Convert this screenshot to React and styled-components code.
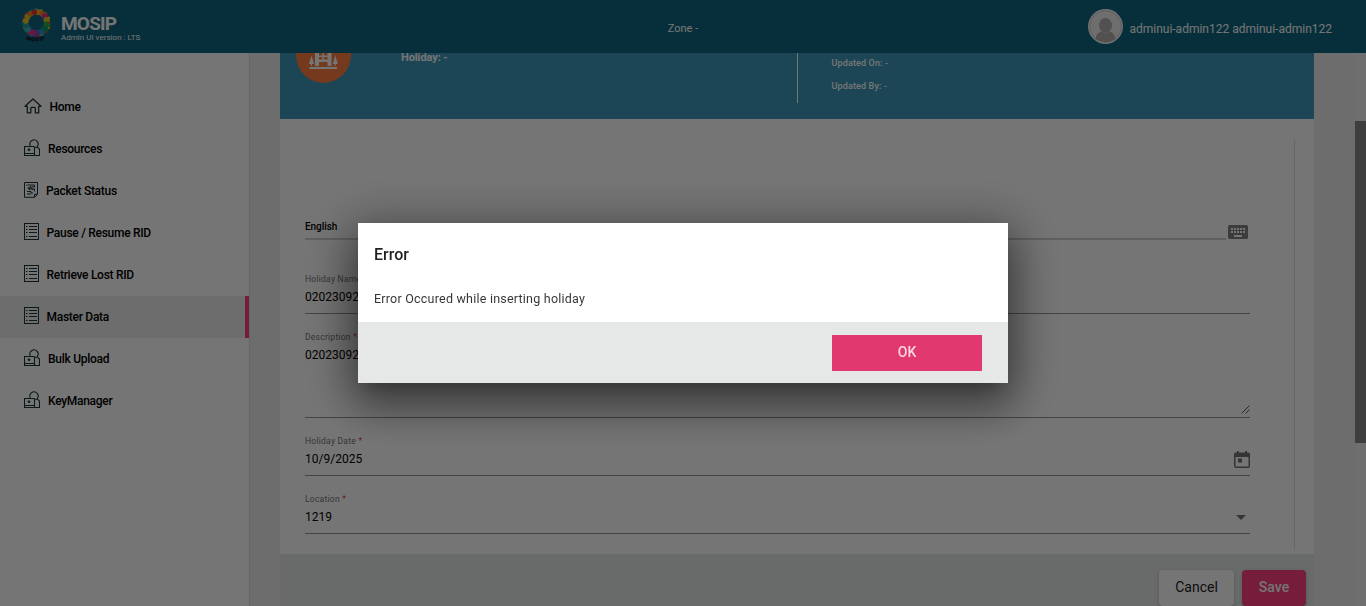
import React from "react";
import styled, { createGlobalStyle } from "styled-components";

const GlobalStyle = createGlobalStyle`
  * { box-sizing: border-box; }
  html, body { margin: 0; padding: 0; overflow: hidden; }
  body { font-family: Roboto, "Liberation Sans", sans-serif; color: #000; }
  svg { display: block; flex: none; }
`;

const Page = styled.div`
  display: flex;
  flex-direction: column;
  height: 606px;
  width: 1366px;
  overflow: hidden;
  background: #eeeeee;
`;

const Header = styled.header`
  flex: none;
  height: 53px;
  background: #0f6882;
  color: #fff;
  display: grid;
  grid-template-columns: 1fr auto 1fr;
  align-items: start;
`;

const Brand = styled.div`
  display: flex;
  padding: 7px 0 0 20px;
`;

const BrandText = styled.div`
  margin: 8px 0 0 8px;
`;

const BrandName = styled.div`
  font-size: 19px;
  line-height: 18px;
  font-weight: 700;
  letter-spacing: -0.8px;
`;

const Version = styled.div`
  font-size: 8px;
  line-height: 9px;
  font-weight: 400;
  letter-spacing: 0.02px;
  white-space: nowrap;
`;

const Zone = styled.div`
  font-size: 11px;
  line-height: 14px;
  padding-top: 22px;
`;

const User = styled.div`
  display: flex;
  justify-content: flex-end;
  padding: 9px 34px 0 0;
`;

const UserName = styled.div`
  font-size: 12px;
  line-height: 16px;
  margin: 12px 0 0 6px;
`;

const Body = styled.div`
  flex: 1;
  min-height: 0;
  display: flex;
`;

const Sidebar = styled.nav`
  width: 250px;
  flex: none;
  padding-top: 33px;
  background: #fff;
  border-right: 1px solid #dcdcdc;
`;

const NavItem = styled.div`
  height: 42px;
  display: flex;
  align-items: center;
  padding-left: 24px;
  font-size: 12px;
  font-weight: 500;
  letter-spacing: -0.28px;
  background: ${(p) => (p.$active ? "#eeeeee" : "transparent")};
  border-right: 4px solid ${(p) => (p.$active ? "#ff4081" : "transparent")};
`;

const NavIcon = styled.span`
  display: block;
  margin: -3px ${(p) => p.$gap}px 0 0;
`;

const Main = styled.main`
  flex: 1;
  display: flex;
  padding-left: 30px;
`;

const Panel = styled.section`
  width: 1034px;
  flex: none;
  display: flex;
  flex-direction: column;
`;

const Banner = styled.div`
  height: 66px;
  flex: none;
  overflow: hidden;
  background: #3d9abb;
  color: #fff;
  display: flex;
  padding-left: 16px;
`;

const Badge = styled.div`
  width: 55px;
  height: 56px;
  margin: -26px 1px 0 0;
  border-radius: 50%;
  background: #ff7c3f;
  flex: none;
  & > svg { margin: -1px 0 0 -1px; }
`;

const BannerTitle = styled.div`
  width: 396px;
  margin: 0 0 0 49px;
  font-size: 11px;
  line-height: 10px;
  font-weight: 700;
  letter-spacing: -0.1px;
`;

const BannerMeta = styled.div`
  height: 50px;
  border-left: 1px solid #fff;
  padding-left: 33.5px;
  font-size: 9px;
  line-height: 23px;
  font-weight: 500;
  letter-spacing: 0.14px;
  & > div:first-child { margin-top: -1px; }
`;

const Form = styled.div`
  height: 435px;
  flex: none;
  background: #fff;
  display: flex;
  padding: 21px 19px 5px 25px;
`;

const Fields = styled.div`
  width: 970px;
  padding-right: 25px;
`;

const Divider = styled.div`
  width: 1px;
  margin-left: 19px;
  background: #dddddd;
`;

const LanguageRow = styled.div`
  display: flex;
  align-items: flex-start;
  margin-top: 79px;
  height: 29px;
`;

const Language = styled.div`
  width: 921px;
  height: 21px;
  border-bottom: 2px solid #d0d0d0;
  font-size: 10px;
  line-height: 15px;
  font-weight: 500;
  letter-spacing: -0.05px;
`;

const Keyboard = styled.div`
  margin: 6px 0 0 2px;
`;

const Field = styled.div`
  width: 945px;
  height: ${(p) => p.$height}px;
  border-bottom: 1px solid #949494;
  display: flex;
  justify-content: space-between;
  padding-top: ${(p) => p.$top}px;
`;

const Label = styled.div`
  font-size: 8.5px;
  line-height: 12px;
  letter-spacing: 0.25px;
  color: #757575;
  & > span { color: #f4434a; }
`;

const Value = styled.div`
  font-size: 12px;
  line-height: 16px;
  letter-spacing: 0.02px;
  margin-top: 4px;
`;

const Adornment = styled.div`
  align-self: flex-end;
  margin: 0 ${(p) => p.$right || 0}px ${(p) => p.$bottom}px 0;
`;

const Footer = styled.div`
  flex: 1;
  background: #e5e9e8;
  display: flex;
  justify-content: flex-end;
  gap: 8px;
  padding: 16px 8px 0;
`;

const Button = styled.button`
  width: ${(p) => p.$width}px;
  height: 36px;
  flex: none;
  border: 0;
  padding: 0 0 2px;
  border-radius: 4px;
  font: ${(p) => (p.$primary ? 500 : 400)} 14px/34px Roboto, sans-serif;
  color: ${(p) => (p.$primary ? "#fff" : "#212121")};
  background: ${(p) => (p.$primary ? "#ff4081" : "#fff")};
  box-shadow: 0 3px 1px -2px rgba(0,0,0,.2), 0 2px 2px rgba(0,0,0,.14), 0 1px 5px rgba(0,0,0,.12);
`;

const ScrollTrack = styled.div`
  margin-left: auto;
  width: 11px;
  padding-top: 68px;
  background: #f1f1f1;
`;

const ScrollThumb = styled.div`
  height: 322px;
  background: #888;
`;

const Backdrop = styled.div`
  position: fixed;
  inset: 0;
  background: rgba(0, 0, 0, 0.54);
  display: flex;
  align-items: center;
  justify-content: center;
`;

const Dialog = styled.div`
  width: 650px;
  height: 160px;
  display: flex;
  flex-direction: column;
  background: #fff;
  box-shadow: 0 11px 15px -7px rgba(0,0,0,.2), 0 24px 38px 3px rgba(0,0,0,.24), 0 9px 46px 8px rgba(0,0,0,.38);
`;

const DialogBody = styled.div`
  height: 99px;
  padding: 22px 16px 0;
  color: rgba(0, 0, 0, 0.87);
`;

const DialogTitle = styled.h2`
  margin: 0;
  font-size: 16px;
  line-height: 20px;
  font-weight: 500;
`;

const DialogText = styled.p`
  margin: 25px 0 0;
  font-size: 12.5px;
  line-height: 18px;
  letter-spacing: 0.22px;
  color: rgba(0, 0, 0, 0.8);
`;

const DialogActions = styled.div`
  flex: 1;
  background: #e5e8e7;
  display: flex;
  justify-content: flex-end;
  padding: 13px 26px 0;
`;

const OkButton = styled.button`
  width: 150px;
  height: 36px;
  border: 0;
  padding: 0 0 2px;
  background: #e1386f;
  color: rgba(255, 255, 255, 0.8);
  font: 500 14px/34px Roboto, sans-serif;
`;

const BEAD_COLORS = ["#e8323c", "#f6b51e", "#e5243b", "#d5a021", "#8b2f8f", "#19a0dc", "#2ba84a", "#57b947", "#1c9ad6", "#7b3f98", "#e5318a", "#1d9c9c", "#36b5c9", "#f7c71f", "#f58220", "#fbd11c"];
const RING = [
  [-80, 2.8, "#f6b51e"], [-58, 2.6, "#f58220"], [-36, 3.1, "#e5318a"], [-14, 3.2, "#d9c521"],
  [12, 3.6, "#2ba84a"], [40, 3.7, "#149a6b"], [66, 3.5, "#1c9ad6"], [92, 3.9, "#8b4fa8"],
  [120, 3.4, "#e5318a"], [145, 3.3, "#36b5c9"], [168, 3.3, "#1d9c9c"], [192, 3.1, "#f7c71f"],
  [215, 3, "#e8c21e"], [238, 2.9, "#f58220"], [260, 2.6, "#e8323c"],
];

function Logo() {
  const polar = (r, deg) => [16.3 + r * Math.cos((deg * Math.PI) / 180), 15.8 + r * Math.sin((deg * Math.PI) / 180)];
  return (
    <svg width="33" height="37" viewBox="0 0 33 37">
      <circle cx="16.3" cy="15.8" r="10.7" fill="none" stroke="#c9b02c" strokeWidth="5" />
      {RING.map(([deg, r, color]) => {
        const [cx, cy] = polar(10.8, deg);
        return <circle key={deg} cx={cx} cy={cy} r={r} fill={color} />;
      })}
      {BEAD_COLORS.map((color, i) => {
        const [cx, cy] = polar(13.6, i * 22.5 - 68);
        return <circle key={color} cx={cx} cy={cy} r="1.1" fill={BEAD_COLORS[(i + 13) % 16]} />;
      })}
      <path id="logo-arc" d="M6 32.5 Q16.5 36.5 28 31.5" fill="none" />
      <text fontSize="5.5" fontWeight="900" fill="#111" letterSpacing="0.6">
        <textPath href="#logo-arc">MOSIP</textPath>
      </text>
    </svg>
  );
}

function Avatar() {
  return (
    <svg width="35" height="35" viewBox="0 0 35 35">
      <circle cx="17.5" cy="17.5" r="17.5" fill="#f4f4f4" />
      <circle cx="17.5" cy="17.5" r="15.8" fill="#f0f0f0" stroke="#c8c8c8" strokeWidth="0.9" />
      <ellipse cx="17.5" cy="16.5" rx="6.5" ry="7.5" fill="#b5b1ad" />
      <path d="M7.5 30 Q8.5 23.2 14 22.8 Q17.5 26 21 22.8 Q26.5 23.2 27.5 30 Q17.5 36.5 7.5 30Z" fill="#b5b1ad" />
    </svg>
  );
}

function HomeIcon() {
  return (
    <svg width="18" height="16" viewBox="0 0 18 16" fill="none" stroke="#1c3238" strokeWidth="1.25" strokeLinejoin="round" strokeLinecap="round">
      <path d="M1 8.3 L9 1 L17 8.3 H14.7 V14.8 H11.3 V10.2 Q11.3 9.3 10.4 9.3 H7.7 Q6.8 9.3 6.8 10.2 V14.8 H3.3 V8.3 Z" />
    </svg>
  );
}

function ResourceIcon() {
  return (
    <svg width="16" height="17" viewBox="0 0 16 17" fill="none" stroke="#1c3238" strokeWidth="1">
      <path d="M6.3 6.8 A4.1 4.1 0 1 1 13 7.8" strokeWidth="1.1" />
      <path d="M10.5 7.5 H0.5 V16.5 H15.5 V10 L13.5 8.3 H10.5 V16" strokeWidth="1.1" />
      <path d="M0.5 14.5 H10.5" />
      <circle cx="5" cy="10.7" r="0.9" fill="#1c3238" />
    </svg>
  );
}

function PacketIcon() {
  return (
    <svg width="14" height="16" viewBox="0 0 14 16" fill="none" stroke="#1c3238" strokeWidth="1">
      <path d="M0.5 0.5 H13.5 V12.3 L10.5 15.3 H0.5 Z M13.5 12.3 H10.5 V15.3" />
      <path d="M3 2.5 V4 M4 3 H10.5 V5 H5 V7 H10.5 V9.5 M3.5 6 L6 8 M3 9.5 H7 V11 H9 M6 5 L9 8" />
      <path d="M3 12 H7" />
    </svg>
  );
}

function ListIcon() {
  return (
    <svg width="15" height="17" viewBox="0 0 15 17" fill="none" stroke="#1c3238" strokeWidth="1">
      <rect x="0.5" y="0.5" width="14" height="16" />
      <path d="M2 3.5 H3.5 M2 6.5 H3.5 M2 9.5 H3.5 M2 13.5 H3.5 M5 3.5 H13 M5 6.5 H13 M5 9.5 H13 M5 13.5 H13" />
    </svg>
  );
}

function BuildingIcon() {
  return (
    <svg width="57" height="57" viewBox="0 0 57 57" fill="#fff">
      <path fillRule="evenodd" d="M20 20 H36.5 V40 H32.5 V36 H24 V40 H20 Z M24 27 V29.5 H27.5 V27 Z M29 27 V29.5 H32.5 V27 Z M24 31 V33.5 H27.5 V31 Z M29 31 V33.5 H32.5 V31 Z" />
      <path d="M16.5 29.5 L19 38 H17 V40 H16 V38 H14 Z M40.3 29.5 L42.8 38 H40.8 V40 H39.8 V38 H37.8 Z" />
      <rect x="14.5" y="41" width="27.5" height="2" />
    </svg>
  );
}

function KeyboardIcon() {
  return (
    <svg width="20" height="14" viewBox="0 0 20 14">
      <rect width="20" height="14" rx="1.5" fill="#838383" />
      {[3, 6, 9, 12, 15].map((x) => (
        <path key={x} d={`M${x} 3h2v2h-2z M${x} 6h2v2h-2z`} fill="#fff" />
      ))}
      <rect x="6" y="10" width="8" height="2" fill="#fff" />
    </svg>
  );
}

function CalendarIcon() {
  return (
    <svg width="16" height="18" viewBox="0 0 16 18" fill="#757575">
      <path fillRule="evenodd" d="M3 0 H4.8 V1.5 H11.2 V0 H13 V1.5 H14.2 Q16 1.5 16 3.2 V15.3 Q16 17 14.2 17 H1.8 Q0 17 0 15.3 V3.2 Q0 1.5 1.8 1.5 H3 Z M1.5 6 V15.5 H14.5 V6 Z" />
      <rect x="4" y="7.5" width="4" height="4" />
    </svg>
  );
}

const NAV = [
  { label: "Home", Icon: HomeIcon, gap: 7.5 },
  { label: "Resources", Icon: ResourceIcon, gap: 8 },
  { label: "Packet Status", Icon: PacketIcon, gap: 8 },
  { label: "Pause / Resume RID", Icon: ListIcon, gap: 7.5 },
  { label: "Retrieve Lost RID", Icon: ListIcon, gap: 7.5 },
  { label: "Master Data", Icon: ListIcon, gap: 7.5, active: true },
  { label: "Bulk Upload", Icon: ResourceIcon, gap: 8 },
  { label: "KeyManager", Icon: ResourceIcon, gap: 8 },
];

function FormField({ label, value, height, top, children }) {
  return (
    <Field $height={height} $top={top}>
      <div>
        <Label>{label} <span>*</span></Label>
        <Value>{value}</Value>
      </div>
      {children}
    </Field>
  );
}

export default function App() {
  return (
    <>
      <GlobalStyle />
      <Page>
        <Header>
          <Brand>
            <Logo />
            <BrandText>
              <BrandName>MOSIP</BrandName>
              <Version>Admin UI version : LTS</Version>
            </BrandText>
          </Brand>
          <Zone>Zone -</Zone>
          <User>
            <Avatar />
            <UserName>adminui-admin122 adminui-admin122</UserName>
          </User>
        </Header>
        <Body>
          <Sidebar>
            {NAV.map(({ label, Icon, gap, active }) => (
              <NavItem key={label} $active={active}>
                <NavIcon $gap={gap}><Icon /></NavIcon>
                {label}
              </NavItem>
            ))}
          </Sidebar>
          <Main>
            <Panel>
              <Banner>
                <Badge><BuildingIcon /></Badge>
                <BannerTitle>Holiday: -</BannerTitle>
                <BannerMeta>
                  <div>Updated On: -</div>
                  <div>Updated By: -</div>
                </BannerMeta>
              </Banner>
              <Form>
                <Fields>
                  <LanguageRow>
                    <Language>English</Language>
                    <Keyboard><KeyboardIcon /></Keyboard>
                  </LanguageRow>
                  <FormField label="Holiday Name" value="02023092" height={66} top={25} />
                  <FormField label="Description" value="02023092" height={104} top={17}>
                    <Adornment $bottom={3}>
                      <svg width="9" height="9" viewBox="0 0 9 9" stroke="#444" strokeWidth="0.9">
                        <path d="M0.5 8.5 L8.5 0.5 M4.5 8.5 L8.5 4.5" />
                      </svg>
                    </Adornment>
                  </FormField>
                  <FormField label="Holiday Date" value="10/9/2025" height={58} top={17}>
                    <Adornment $bottom={6}><CalendarIcon /></Adornment>
                  </FormField>
                  <FormField label="Location" value="1219" height={58} top={17}>
                    <Adornment $bottom={13} $right={4}>
                      <svg width="10" height="5" viewBox="0 0 10 5"><path d="M0 0H10L5 5Z" fill="#757575" /></svg>
                    </Adornment>
                  </FormField>
                </Fields>
                <Divider />
              </Form>
              <Footer>
                <Button $width={75}>Cancel</Button>
                <Button $width={64} $primary>Save</Button>
              </Footer>
            </Panel>
            <ScrollTrack><ScrollThumb /></ScrollTrack>
          </Main>
        </Body>
      </Page>
      <Backdrop>
        <Dialog role="dialog">
          <DialogBody>
            <DialogTitle>Error</DialogTitle>
            <DialogText>Error Occured while inserting holiday</DialogText>
          </DialogBody>
          <DialogActions><OkButton>OK</OkButton></DialogActions>
        </Dialog>
      </Backdrop>
    </>
  );
}
